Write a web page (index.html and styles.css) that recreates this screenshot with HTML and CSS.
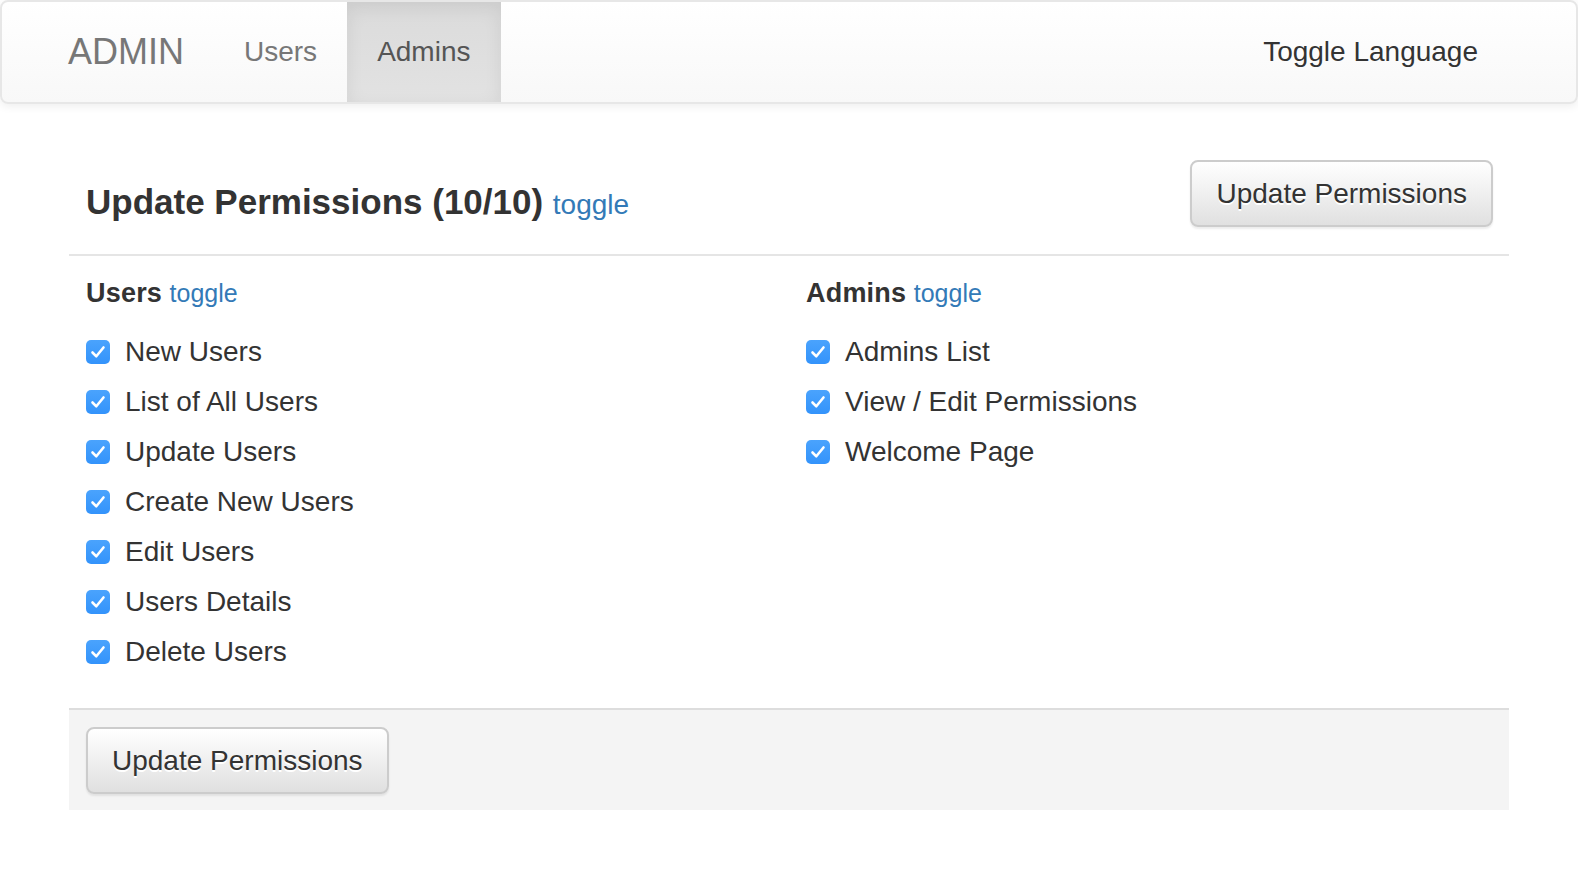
FILE: index.html
```html
<!DOCTYPE html>
<html>
<head>
<meta charset="utf-8">
<title>Admin - Update Permissions</title>
<link rel="stylesheet" href="styles.css">
</head>
<body>
<nav class="navbar">
  <div class="nav-left">
    <a class="brand">ADMIN</a>
    <a class="nav-link">Users</a>
    <a class="nav-link active">Admins</a>
  </div>
  <a class="nav-link dark">Toggle Language</a>
</nav>

<div class="container">
  <div class="header">
    <h4 class="title">Update Permissions (10/10) <a class="toggle big">toggle</a></h4>
    <button class="btn">Update Permissions</button>
  </div>
  <div class="rule"></div>
  <div class="columns">
    <div class="col">
      <div class="section-title"><b>Users</b> <a class="toggle">toggle</a></div>
      <ul class="list">
        <li class="item"><span class="check"><svg viewBox="0 0 24 24"><polyline points="6.5,12.5 10.3,16.3 17.5,7.5"/></svg></span>New Users</li>
        <li class="item"><span class="check"><svg viewBox="0 0 24 24"><polyline points="6.5,12.5 10.3,16.3 17.5,7.5"/></svg></span>List of All Users</li>
        <li class="item"><span class="check"><svg viewBox="0 0 24 24"><polyline points="6.5,12.5 10.3,16.3 17.5,7.5"/></svg></span>Update Users</li>
        <li class="item"><span class="check"><svg viewBox="0 0 24 24"><polyline points="6.5,12.5 10.3,16.3 17.5,7.5"/></svg></span>Create New Users</li>
        <li class="item"><span class="check"><svg viewBox="0 0 24 24"><polyline points="6.5,12.5 10.3,16.3 17.5,7.5"/></svg></span>Edit Users</li>
        <li class="item"><span class="check"><svg viewBox="0 0 24 24"><polyline points="6.5,12.5 10.3,16.3 17.5,7.5"/></svg></span>Users Details</li>
        <li class="item"><span class="check"><svg viewBox="0 0 24 24"><polyline points="6.5,12.5 10.3,16.3 17.5,7.5"/></svg></span>Delete Users</li>
      </ul>
    </div>
    <div class="col">
      <div class="section-title"><b>Admins</b> <a class="toggle">toggle</a></div>
      <ul class="list">
        <li class="item"><span class="check"><svg viewBox="0 0 24 24"><polyline points="6.5,12.5 10.3,16.3 17.5,7.5"/></svg></span>Admins List</li>
        <li class="item"><span class="check"><svg viewBox="0 0 24 24"><polyline points="6.5,12.5 10.3,16.3 17.5,7.5"/></svg></span>View / Edit Permissions</li>
        <li class="item"><span class="check"><svg viewBox="0 0 24 24"><polyline points="6.5,12.5 10.3,16.3 17.5,7.5"/></svg></span>Welcome Page</li>
      </ul>
    </div>
  </div>
  <div class="footer">
    <button class="btn">Update Permissions</button>
  </div>
</div>
</body>
</html>
```

FILE: styles.css
```css
* { box-sizing: border-box; }

body {
  margin: 0;
  font-family: "Liberation Sans", Arial, Helvetica, sans-serif;
  color: #333;
  background: #fff;
}

.navbar {
  display: flex;
  justify-content: space-between;
  align-items: stretch;
  height: 104px;
  border: 2px solid #e7e7e7;
  border-radius: 8px;
  background: linear-gradient(to bottom, #ffffff 0%, #f8f8f8 100%);
  box-shadow: inset 0 2px 0 rgba(255,255,255,.15), 0 2px 10px rgba(0,0,0,.075);
  padding: 0 68px 0 36px;
}

.nav-left {
  display: flex;
  align-items: stretch;
}

.brand {
  font-size: 36px;
  line-height: 100px;
  padding: 0 30px;
  color: #777;
}

.nav-link {
  font-size: 28px;
  line-height: 100px;
  padding: 0 30px;
  color: #777;
}

.nav-link.active {
  color: #555;
  background: linear-gradient(to bottom, #dbdbdb 0%, #e2e2e2 100%);
  box-shadow: inset 0 6px 18px rgba(0,0,0,.075);
}

.nav-link.dark {
  color: #333;
}

.container {
  width: 1440px;
  margin: 56px auto 0;
}

.header {
  display: flex;
  justify-content: space-between;
  align-items: flex-start;
  padding: 0 16px 0 17px;
  margin-bottom: 27px;
}

.title {
  margin: 22px 0 0;
  font-size: 35px;
  line-height: 40px;
  font-weight: bold;
  color: #333;
}

.toggle {
  color: #337ab7;
  font-weight: normal;
  font-size: 25px;
}

.toggle.big {
  font-size: 28px;
}

.btn {
  font-family: "Liberation Sans", Arial, Helvetica, sans-serif;
  font-size: 28px;
  line-height: 39px;
  padding: 12px 24px;
  color: #333;
  border: 2px solid #ccc;
  border-radius: 8px;
  background: linear-gradient(to bottom, #ffffff 0%, #e0e0e0 100%);
  box-shadow: inset 0 2px 0 rgba(255,255,255,.15), 0 2px 2px rgba(0,0,0,.075);
  text-shadow: 0 2px 0 #fff;
}

.rule {
  height: 2px;
  background: #e5e5e5;
}

.columns {
  display: grid;
  grid-template-columns: 720px 703px;
  padding: 0 0 0 17px;
}

.section-title {
  margin-top: 20px;
  font-size: 27px;
  line-height: 34px;
}

.section-title b {
  letter-spacing: 0.2px;
}

.list {
  list-style: none;
  margin: 22px 0 0;
  padding: 0;
  display: flex;
  flex-direction: column;
  gap: 10px;
}

.item {
  display: flex;
  align-items: center;
  gap: 15px;
  font-size: 28px;
  line-height: 40px;
}

.check {
  width: 24px;
  height: 24px;
  border-radius: 5px;
  background: linear-gradient(to bottom, #4aa3fd 0%, #3393fb 100%);
  display: flex;
  flex-shrink: 0;
}

.check svg {
  width: 24px;
  height: 24px;
}

.check polyline {
  fill: none;
  stroke: #fff;
  stroke-width: 2.6;
  stroke-linecap: round;
  stroke-linejoin: round;
}

.footer {
  margin-top: 36px;
  border-top: 2px solid #ddd;
  background: #f4f4f4;
  padding: 17px 17px 16px;
}
```
